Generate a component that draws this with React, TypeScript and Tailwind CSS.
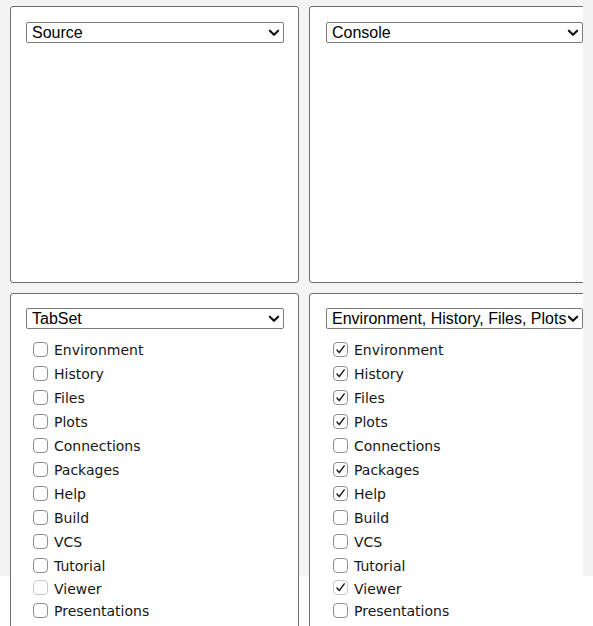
import React from 'react'

const PANES = [
  'Environment',
  'History',
  'Files',
  'Plots',
  'Connections',
  'Packages',
  'Help',
  'Build',
  'VCS',
  'Tutorial',
  'Viewer',
  'Presentations',
]

const RIGHT_CHECKED = ['Environment', 'History', 'Files', 'Plots', 'Packages', 'Help', 'Viewer']

function Chevron() {
  return (
    <svg width="13" height="8" viewBox="0 0 13 8" className="shrink-0 bg-white pl-[1px]">
      <path d="M2 1.5 L6.5 6 L11 1.5" fill="none" stroke="#111" strokeWidth="2.3" strokeLinecap="round" strokeLinejoin="round" />
    </svg>
  )
}

function Select({ value, width }: { value: string; width: string }) {
  return (
    <div
      className={`flex h-[21px] items-center border border-[#7a7a7a] rounded-[2px] bg-white pl-[5px] pr-[3px] ${width}`}
      style={{ fontFamily: '"Liberation Sans", Arial, sans-serif' }}
    >
      <span className="min-w-0 flex-1 overflow-hidden whitespace-nowrap text-[16px] leading-[19px] text-black">
        {value}
      </span>
      <Chevron />
    </div>
  )
}

function Checkbox({ label, checked, faint, short }: { label: string; checked: boolean; faint?: boolean; short?: boolean }) {
  return (
    <div className={`flex items-center gap-[6px] ${short ? 'h-[21px]' : 'h-[24px]'}`}>
      <span
        className={`flex h-[15px] w-[15px] items-center justify-center rounded-[4px] border bg-white ${
          faint ? 'border-[#c9c9c9]' : 'border-[#8f8f8f]'
        }`}
      >
        {checked && (
          <svg width="11" height="11" viewBox="0 0 11 11">
            <path d="M2 6 L4.3 8.6 L9.2 1.8" fill="none" stroke="#111" strokeWidth="1.4" strokeLinecap="round" strokeLinejoin="round" />
          </svg>
        )}
      </span>
      <span className="pt-[2px] text-[14px] leading-none text-[#161616]" style={{ fontFamily: '"DejaVu Sans", sans-serif' }}>
        {label}
      </span>
    </div>
  )
}

function PaneList({ checked }: { checked: string[] }) {
  return (
    <div className="mt-[8px] flex flex-col pl-[7px]">
      {PANES.map(p => (
        <Checkbox key={p} label={p} checked={checked.includes(p)} faint={p === 'Viewer'} short={p === 'Viewer'} />
      ))}
    </div>
  )
}

export default function App() {
  return (
    <div className="bg-[linear-gradient(#f3f4f3,#f3f4f3)] bg-[length:100%_576px] bg-no-repeat">
      <div className="w-[583px] overflow-hidden">
        <div className="grid w-max grid-cols-[289px_290px] gap-x-[10px] gap-y-[10px] pl-[10px] pt-[6px]">
          {/* top row */}
          <div className="h-[277px] rounded-[3px] border border-[#6e6e6e] bg-white pl-[15px] pt-[15px]">
            <Select value="Source" width="w-[258px]" />
          </div>
          <div className="h-[277px] rounded-[3px] border border-[#6e6e6e] bg-white pl-[16px] pt-[15px]">
            <Select value="Console" width="w-[257px]" />
          </div>

          {/* bottom row */}
          <div className="rounded-[3px] border border-[#6e6e6e] bg-white pb-[20px] pl-[15px] pt-[14px]">
            <Select value="TabSet" width="w-[258px]" />
            <PaneList checked={[]} />
          </div>
          <div className="rounded-[3px] border border-[#6e6e6e] bg-white pb-[20px] pl-[16px] pt-[14px]">
            <Select value="Environment, History, Files, Plots, Packages, Help, Viewer" width="w-[257px]" />
            <PaneList checked={RIGHT_CHECKED} />
          </div>
        </div>
      </div>
    </div>
  )
}
